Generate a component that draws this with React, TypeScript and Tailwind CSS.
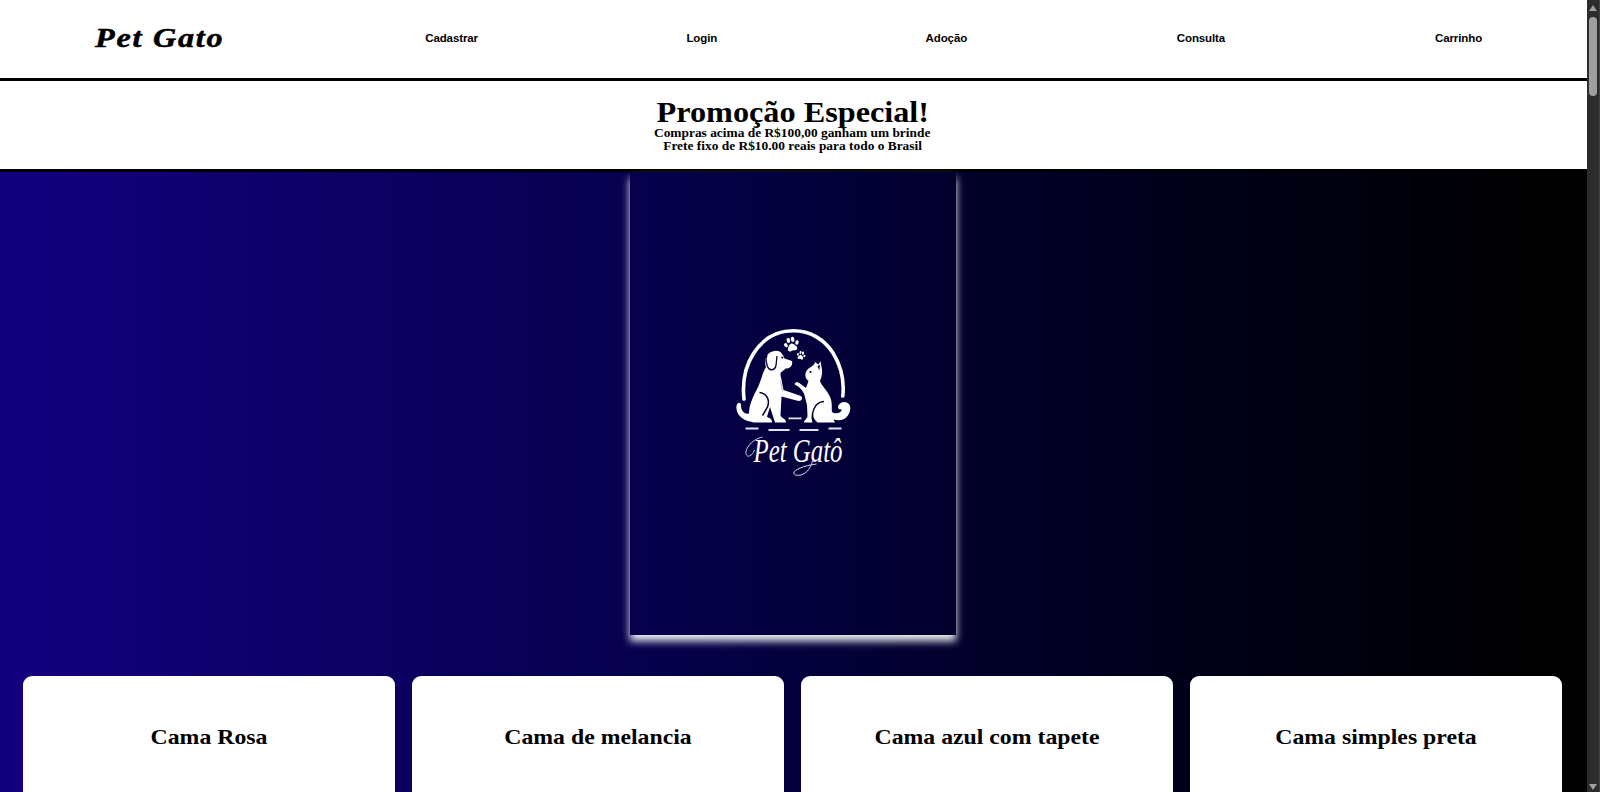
const products = ['Cama Rosa', 'Cama de melancia', 'Cama azul com tapete', 'Cama simples preta'];

function Paw({ x, y, s, r }: { x: number; y: number; s: number; r: number }) {
  return (
    <g transform={`translate(${x} ${y}) rotate(${r}) scale(${s})`}>
      <path d="M0-1C2-1 3 1.500 4.200 2.800C5.500 5 3.500 6.800 1.500 6C.5 5.600-.5 5.600-1.500 6C-3.500 6.800-5.500 5-4.200 2.800C-3 1.500-2-1 0-1Z" />
      <ellipse cx="-5.300" cy="-.6" rx="1.600" ry="2.200" transform="rotate(-25 -5.300 -.6)" />
      <ellipse cx="-2" cy="-4.500" rx="1.700" ry="2.500" />
      <ellipse cx="2.200" cy="-4.500" rx="1.700" ry="2.500" />
      <ellipse cx="5.500" cy="-.6" rx="1.600" ry="2.200" transform="rotate(25 5.500 -.6)" />
    </g>
  );
}

function Logo() {
  return (
    <svg width="145" height="175" viewBox="0.5 0 145 175" fill="#fff" className="block shrink-0">
      <path d="M23.500 84C21.500 66 25 51 33 38.500C42 24.500 56 15.800 73 15.800C90 15.800 104 24.500 112.500 38C120.500 51 124 65 122.300 81" fill="none" stroke="#fff" strokeWidth="3.600" strokeLinecap="round" />
      <Paw x={71} y={29.500} s={1.05} r={-14} />
      <Paw x={80.500} y={40.500} s={0.62} r={14} />
      {/* dog */}
      <path d="M31 106.800C22 106 15 99 16 91C16.500 87 20.500 86.500 20.500 90C20.500 95 23 99.500 28.500 98.500C28.500 89 33 81 38 71C41 64 42 58 45.500 52C43 45 46 37 54 36C59 35 62 38 64 43.500L71.500 46C72.500 50.500 69.500 53.500 65 53.500C63.500 56 59.500 56.500 60 60L63 75L79 80.500C83 81.500 82 86 78 86L61 81.500L60 100C60.500 103.500 65.500 103 65.500 107.500H54.500L49.500 92L46.500 101.500C48.500 103.500 52 103.500 51.500 107.500H33Z" />
      <path d="M46.500 40C44 45 46 47 47 51.500C49 56.500 54.500 55.500 55.500 50.500L56.500 41" fill="#fff" stroke="#030035" strokeWidth="1.300" />
      <path d="M39 77.500C46.500 78 49.500 85 47 92L42 100.500" fill="none" stroke="#030035" strokeWidth="1.500" />
      <path d="M60 66L62 76.500" fill="none" stroke="#8d8aa8" strokeWidth=".6" />
      <circle cx="61.800" cy="42.500" r="1.100" fill="#030035" />
      {/* cat */}
      <path d="M83.500 107.500C83.500 104.500 87 104 87 101L86.500 90L84 80C82.500 76 80.500 73.500 77 71C72.500 70 74 66.500 78 67.500L85.500 73L88 66C84 63 84 58 87 54.500C90 51.500 93.500 51.500 94.500 47L98 49.500L100 46L101 52C102.500 58 101 62 99.500 66C101 71 107 75 110 83C112 88 111 94 111.500 97C114 99 120 99 121.500 94.500C115 95.500 117 87 124 87C131.500 87.500 131 96 127 101C123.500 105.500 119 106 113 104.500L114.500 107.500H97C93.500 105 92 101 91.500 97L91 103L92 107.500Z" />
      <path d="M93 107C90.500 99 93 87 103.500 86.500" fill="none" stroke="#030035" strokeWidth="1.400" />
      <path d="M97 51.500L99.300 49.500L99 55.500Z" fill="#030035" />
      <circle cx="90" cy="57" r="1.100" fill="#030035" />
      <path d="M25 113.500H38M48 115H69M68 103.300H81M79 115H98M108 113.500H121" fill="none" stroke="#e4e2f0" strokeWidth="1.800" />
      {/* wordmark */}
      <text x="33" y="147" fontFamily="Liberation Serif, serif" fontStyle="italic" fontSize="33" textLength="89" lengthAdjust="spacingAndGlyphs">Pet Gatô</text>
      <path d="M42 122C29 125 22 138 27 141C30 142 33 138 34 135M92 146C90 154 84 162 75 160C69 157 80 151 96 149" fill="none" stroke="#d9d7ea" strokeWidth="1" />
    </svg>
  );
}

export default function App() {
  return (
    <div className="flex h-[792px] w-[1600px] overflow-hidden bg-[#2c2c2c] text-black">
      <div className="flex w-[1587px] shrink-0 flex-col overflow-hidden">
        <header className="flex h-[81px] shrink-0 items-center justify-between border-b-[3px] border-black bg-white pr-[106px] pb-[1px] pl-[95px] font-['Liberation_Sans',sans-serif] text-[11.5px] font-bold tracking-[-0.1px] whitespace-nowrap">
          <h1 className="w-[121px] origin-left scale-x-[1.19] pb-[2px] font-['Liberation_Serif',serif] text-[27px] leading-[32px] tracking-[1.5px] italic [-webkit-text-stroke:0.5px_black]">Pet Gato</h1>
          <a className="w-[52px] pt-px">Cadastrar</a>
          <a className="w-[30px] pt-px">Login</a>
          <a className="w-[42px] pt-px">Adoção</a>
          <a className="w-[49px] pt-px">Consulta</a>
          <a className="w-[46px] pt-px">Carrinho</a>
        </header>
        <section className="flex h-[91px] shrink-0 flex-col items-center border-b-[3px] border-black bg-white pt-[15px] pr-[2px] font-['Liberation_Serif',serif] font-bold">
          <h2 className="scale-x-[1.075] text-[30px] leading-[32px]">Promoção Especial!</h2>
          <p className="-mt-[2px] scale-x-[1.03] text-[13px] leading-[13px]">Compras acima de R$100,00 ganham um brinde</p>
          <p className="scale-x-[1.03] text-[13px] leading-[13px]">Frete fixo de R$10.00 reais para todo o Brasil</p>
        </section>
        <main className="flex flex-1 flex-col bg-[linear-gradient(to_right,#130080,#07004e_40%,#04003d_50%,#02002d_60%,#00001a_75%,#000000_98%)]">
          <div className="mr-[1px] flex h-[463px] w-[326px] shrink-0 justify-center self-center pt-[143px] shadow-[0_6px_8px_#fffffff0]">
            <Logo />
          </div>
          <div className="mt-[40.5px] grid flex-1 grid-cols-4 gap-[17px] pr-[25px] pl-[23px]">
            {products.map((name) => (
              <article key={name} className="rounded-t-[9px] bg-white pt-[47.5px] text-center font-['Liberation_Serif',serif]">
                <h3 className="scale-x-[1.08] text-[22px] leading-[28px] font-bold">{name}</h3>
              </article>
            ))}
          </div>
        </main>
      </div>
      <div className="flex w-[13px] flex-col items-center justify-between border-r border-[#55307a] bg-[#2c2c2c] pt-[5px] pb-[2px]">
        <div className="flex flex-col items-center gap-[6px]">
          <svg width="8" height="6" viewBox="0 0 8 6" fill="#9f9f9f"><path d="M4 0L8 6H0Z" /></svg>
          <div className="h-[79px] w-[8px] rounded-full bg-[#9f9f9f]" />
        </div>
        <svg width="8" height="6" viewBox="0 0 8 6" fill="#9f9f9f"><path d="M0 0H8L4 6Z" /></svg>
      </div>
    </div>
  );
}
